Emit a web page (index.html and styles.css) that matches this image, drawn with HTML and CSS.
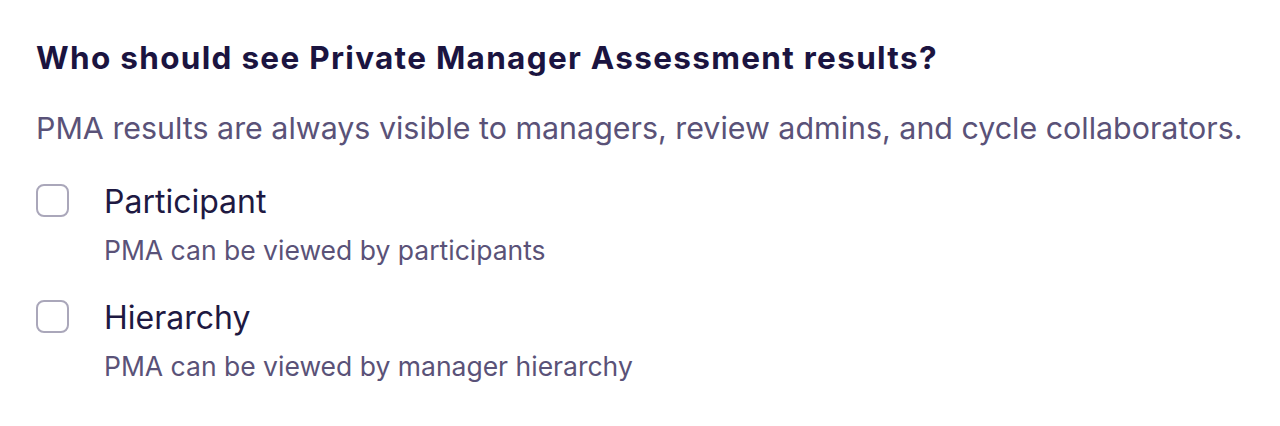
FILE: index.html
```html
<!DOCTYPE html>
<html lang="en">
<head>
  <meta charset="UTF-8">
  <title>PMA visibility</title>
  <link rel="stylesheet" href="styles.css">
</head>
<body>
  <div class="panel">
    <h2 class="title">Who should see Private Manager Assessment results?</h2>
    <p class="subtitle">PMA results are always visible to managers, review admins, and cycle collaborators.</p>

    <div class="options">
      <label class="option">
        <span class="box"></span>
        <span class="option-text">
          <span class="option-name">Participant</span>
          <span class="option-desc">PMA can be viewed by participants</span>
        </span>
      </label>

      <label class="option">
        <span class="box"></span>
        <span class="option-text">
          <span class="option-name">Hierarchy</span>
          <span class="option-desc">PMA can be viewed by manager hierarchy</span>
        </span>
      </label>
    </div>
  </div>
</body>
</html>
```

FILE: styles.css
```css
body {
  font-family: 'Inter', 'Lato', sans-serif;
  margin: 0;
  background: #ffffff;
  color: #1b1440;
}

.panel {
  padding: 38px 36px 0 36px;
}

.title {
  font-size: 31.5px;
  font-weight: 700;
  line-height: 40px;
  letter-spacing: 1.3px;
  margin: 0;
  color: #1b1440;
}

.subtitle {
  font-size: 30.4px;
  line-height: 40px;
  margin: 30px 0 0 0;
  color: #5a5278;
}

.options {
  display: flex;
  flex-direction: column;
  gap: 31px;
  margin-top: 34px;
}

.option {
  display: flex;
  align-items: flex-start;
  gap: 35px;
}

.box {
  width: 29px;
  height: 29px;
  border: 2px solid #aaa7ba;
  border-radius: 8px;
  flex-shrink: 0;
  margin-top: 2px;
}

.option-text {
  display: flex;
  flex-direction: column;
  gap: 11px;
}

.option-name {
  font-size: 32px;
  line-height: 40px;
  color: #1e1942;
}

.option-desc {
  font-size: 26.5px;
  line-height: 34px;
  color: #5a5278;
}
```
